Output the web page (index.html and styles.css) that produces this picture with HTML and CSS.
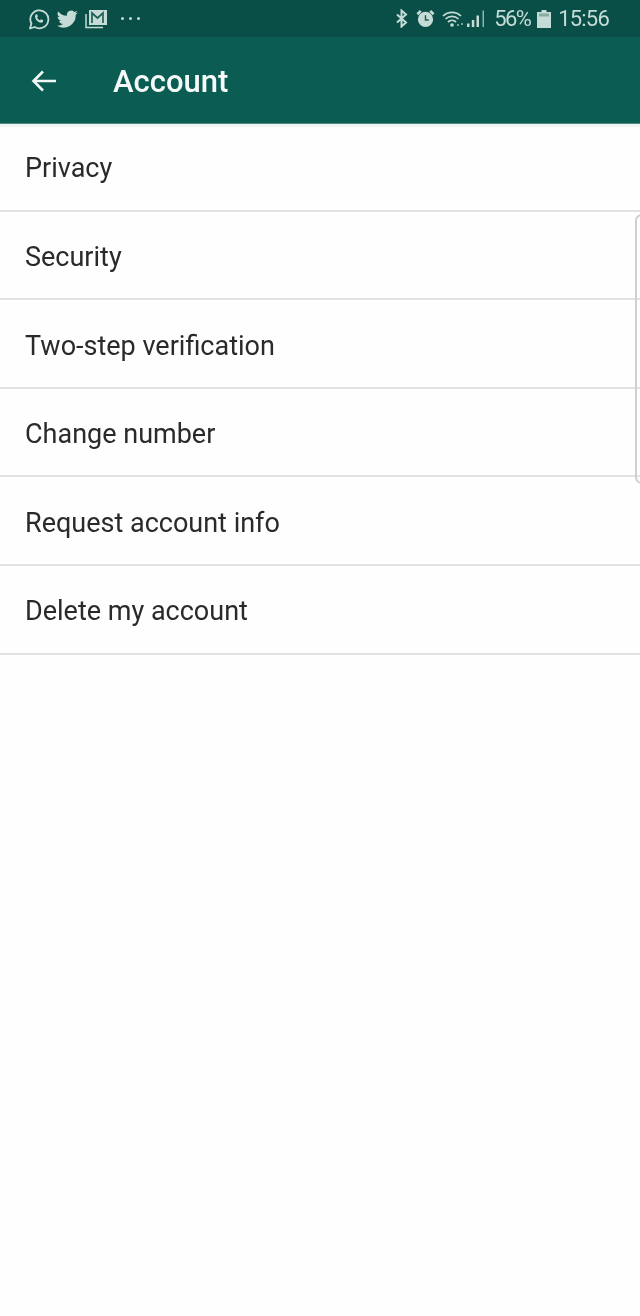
FILE: index.html
```html
<!DOCTYPE html>
<html lang="en">
<head>
<meta charset="utf-8">
<title>Account</title>
<link rel="stylesheet" href="styles.css">
</head>
<body>
<div class="phone">
  <div class="statusbar">
    <div class="status-left">
      <svg class="ico" width="22" height="22" viewBox="0 0 22 22"><path d="M2 20.500l1.400-5A9 9 0 1 1 6.700 19z" fill="none" stroke="#c5dcd6" stroke-width="1.800" stroke-linejoin="round"/><path d="M8 6.300c-1 .8-1.300 2.400-.5 4.100 1 2 2.600 3.500 4.500 4.100 1.300.4 2.500 0 3-1.100l.2-1.100-2.200-1.100-1 1.100c-1.300-.5-2.300-1.600-2.900-2.900l.8-1-.8-2.100z" fill="#c5dcd6"/></svg>
      <svg class="ico" width="21" height="18" viewBox="0 0 24 20"><path d="M23.500 2.600c-.9.4-1.800.6-2.800.8 1-.6 1.800-1.500 2.100-2.700-.9.600-2 1-3.100 1.200A4.900 4.900 0 0 0 11.400 6.400C7.400 6.200 3.800 4.300 1.400 1.300a4.900 4.900 0 0 0 1.500 6.500c-.8 0-1.500-.2-2.200-.6 0 2.400 1.700 4.400 3.900 4.900-.7.200-1.500.2-2.200.1.600 2 2.400 3.400 4.600 3.400A9.800 9.800 0 0 1 0 17.600 13.900 13.900 0 0 0 21.400 5.200c1-.7 1.800-1.600 2.100-2.600z" fill="#c5dcd6"/></svg>
      <svg class="ico" width="23" height="20" viewBox="0 0 23 20"><path d="M1 5v13.500h17" fill="none" stroke="#c5dcd6" stroke-width="1.500"/><rect x="4" y="1" width="18" height="15" fill="#c5dcd6"/><path d="M7 14V4l5.500 5L18 4v10" fill="none" stroke="#1f5f55" stroke-width="1.700"/></svg>
      <div class="dots"><i></i><i></i><i></i></div>
    </div>
    <div class="status-right">
      <svg class="ico" width="12" height="19" viewBox="0 0 12 18"><path d="M1 5l9 8-4.500 4V1L10 5l-9 8" fill="none" stroke="#c5dcd6" stroke-width="2"/></svg>
      <svg class="ico alarm" width="19" height="19" viewBox="0 0 20 19"><circle cx="10" cy="10.500" r="8" fill="#c5dcd6"/><path d="M1.500 5L5 1.500M18.500 5L15 1.500" stroke="#c5dcd6" stroke-width="2.800"/><path d="M10 6v5h3.500" fill="none" stroke="#1f5f55" stroke-width="1.600"/></svg>
      <svg class="ico wifi" width="22" height="18" viewBox="0 0 22 18"><path d="M1 6a13 13 0 0 1 18 0M3.500 9a9.500 9.500 0 0 1 13 0M6 12a6 6 0 0 1 8 0" fill="none" stroke="#c5dcd6" stroke-width="1.700"/><circle cx="10" cy="15" r="1.800" fill="#c5dcd6"/><circle cx="16" cy="15" r="1.100" fill="#8fb5ac"/><circle cx="20" cy="14" r="1.100" fill="#8fb5ac"/></svg>
      <svg class="ico signal" width="19" height="19" viewBox="0 0 19 19"><path d="M0 14.500h2.500V18H0zM4.800 11h2.500v7H4.800zM9.500 6.500H12V18H9.500z" fill="#c5dcd6"/><path d="M15.500 1.500H17V18h-1.500z" fill="#8fb5ac"/></svg>
      <span class="pct">56%</span>
      <svg class="ico batt" width="14" height="18" viewBox="0 0 14 18"><path d="M4.500 0h5v2H14v16H0V2h4.500z" fill="#c5dcd6"/><path d="M2 3.500h10v3H2z" fill="#86ada4"/></svg>
      <span class="time">15:56</span>
    </div>
  </div>
  <header class="appbar">
    <svg class="back" width="26" height="24" viewBox="0 0 26 24"><path d="M25 12H3M12 2.500L2.500 12l9.500 9.500" fill="none" stroke="#f2f8f6" stroke-width="2.600"/></svg>
    <h1 class="title">Account</h1>
  </header>
  <main class="list">
    <div class="row">Privacy</div>
    <div class="row">Security</div>
    <div class="row">Two-step verification</div>
    <div class="row">Change number</div>
    <div class="row">Request account info</div>
    <div class="row">Delete my account</div>
  </main>
  <div class="edge"></div>
</div>
</body>
</html>
```
FILE: styles.css
```css
* { box-sizing: border-box; }
html, body { margin: 0; padding: 0; background: #fff; }
body { font-family: Roboto, "Liberation Sans", sans-serif; }
.phone { position: relative; width: 640px; height: 1316px; overflow: hidden; background: #fefefe; filter: blur(0.45px); }
.statusbar {
  height: 37px;
  background: #0a4f47;
  display: flex;
  justify-content: space-between;
  align-items: center;
  padding: 0 31px 0 28px;
  color: #c5dcd6;
}
.status-left, .status-right { display: flex; align-items: center; }
.status-left { gap: 7px; }
.ico { display: block; flex: none; }
.dots { display: flex; gap: 5px; margin-left: 6px; }
.dots i { width: 3px; height: 3px; border-radius: 50%; background: #c5dcd6; display: block; }
.alarm { margin-left: 8px; }
.wifi { margin-left: 7px; }
.signal { margin-left: 3px; }
.pct { font-size: 22px; margin-left: 8px; letter-spacing: -1.6px; }
.batt { margin-left: 7px; }
.time { font-size: 22px; margin-left: 7px; letter-spacing: -.8px; }
.appbar {
  height: 87px;
  background: #0b5c53;
  display: flex;
  align-items: center;
  padding: 2px 0 0 31px;
  border-bottom: 1px solid #4d8a80;
}
.back { flex: none; }
.title { margin: 0 0 0 56px; font-size: 31px; font-weight: 500; color: #f5faf8; letter-spacing: 0; }
.list { display: block; border-top: 3px solid #eef4f2; }
.row {
  height: 88.6px;
  margin: 0;
  padding: 4px 0 0 25px;
  display: flex;
  align-items: center;
  font-size: 27px;
  color: #2a2a2a;
  border-bottom: 2px solid #e2e2e2;
}
.row:first-child { height: 84.7px; padding-top: 0; }
.edge {
  position: absolute;
  top: 214px;
  right: -8px;
  width: 13px;
  height: 270px;
  border: 2px solid #cfcfcf;
  border-radius: 8px;
}
```
